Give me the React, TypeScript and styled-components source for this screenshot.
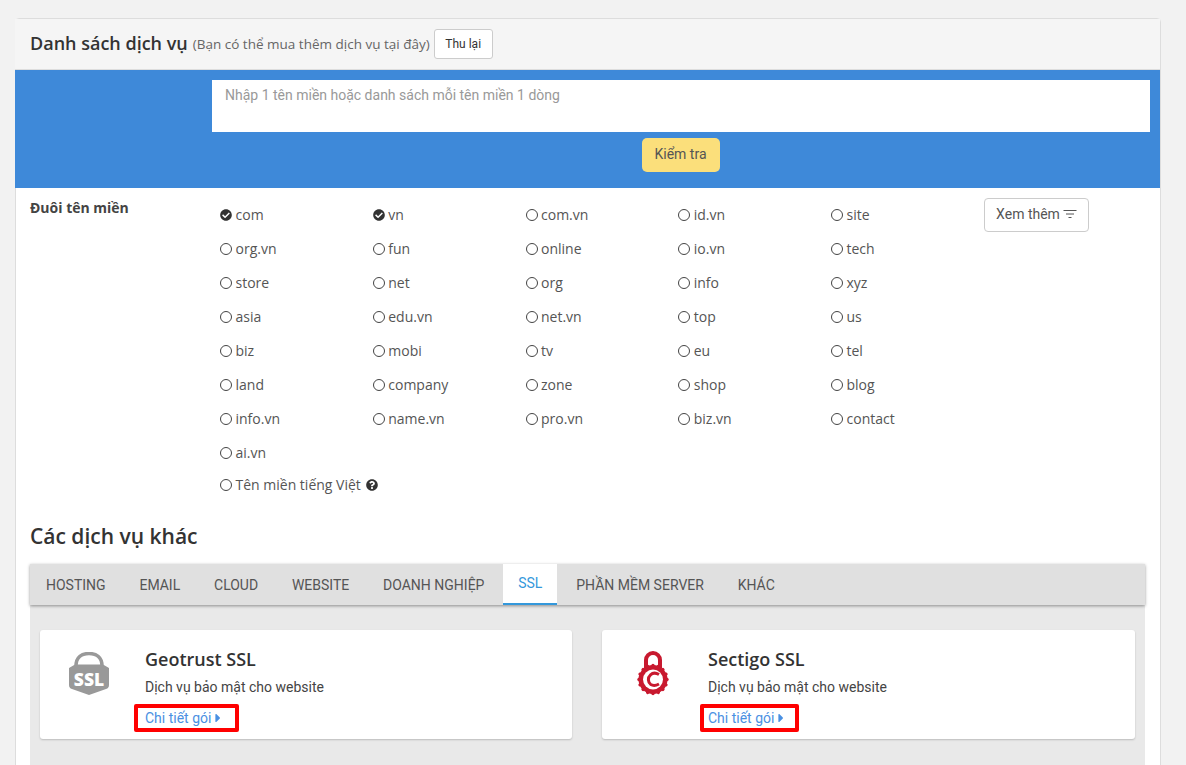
import React from 'react';
import styled, { createGlobalStyle } from 'styled-components';
import { FaCaretRight, FaCheckCircle, FaQuestionCircle } from 'react-icons/fa';

const GlobalStyle = createGlobalStyle`
  html, body {
    margin: 0;
    height: 765px;
    overflow: hidden;
    background: #f2f2f2;
  }
  * {
    box-sizing: border-box;
  }
`;

const Page = styled.div`
  padding: 18px 25px 0 15px;
  font-family: 'Open Sans', sans-serif;
  color: #444;
`;

const Panel = styled.section`
  background: #fff;
  border: 1px solid #ddd;
  border-radius: 4px 4px 0 0;
`;

const PanelHeader = styled.header`
  display: flex;
  align-items: center;
  height: 51px;
  padding: 0 15px;
  background: #f5f5f5;
  border-bottom: 1px solid #ddd;
  margin-left: -1px;
`;

const Title = styled.h3`
  margin: 0 0 3px;
  font-size: 18px;
  font-weight: 600;
  color: #333;
`;

const Hint = styled.span`
  margin-left: 5px;
  font-size: 13.5px;
  color: #666;
`;

const RetryButton = styled.button`
  margin-left: 4px;
  width: 59px;
  height: 30px;
  padding: 0;
  background: #fff;
  border: 1px solid #ccc;
  border-radius: 3px;
  font-family: Roboto, sans-serif;
  font-size: 12px;
  color: #333;
`;

const SearchBand = styled.div`
  display: flex;
  flex-direction: column;
  height: 118px;
  padding: 10px 10px 0 197px;
  background: #3e89d9;
  margin-left: -1px;
`;

const DomainInput = styled.textarea`
  display: block;
  width: 100%;
  height: 52px;
  padding: 7px 13px;
  border: 0;
  border-radius: 0;
  resize: none;
  background: #fff;
  font-family: Roboto, sans-serif;
  font-size: 14px;
  outline: none;
  &::placeholder {
    color: #999;
    opacity: 1;
  }
`;

const CheckButton = styled.button`
  align-self: flex-start;
  margin: 6px 0 0 430px;
  width: 78px;
  height: 34px;
  padding: 0 1px 2px 0;
  background: #fbdf7b;
  border: 0;
  border-radius: 5px;
  font-family: Roboto, sans-serif;
  font-size: 14px;
  color: #555;
`;

const DomainSection = styled.div`
  display: flex;
  padding: 10px 0 0 14px;
`;

const DomainLabel = styled.div`
  width: 190px;
  flex: none;
  font-size: 14px;
  font-weight: 700;
  color: #444;
`;

const DomainGrid = styled.div`
  width: 764px;
  flex: none;
  display: grid;
  grid-template-columns: repeat(5, 152.75px);
  grid-auto-rows: 34px;
`;

const DomainOption = styled.label<{ $wide?: boolean }>`
  display: flex;
  align-items: center;
  gap: 3.5px;
  height: 34px;
  padding-bottom: 1px;
  font-size: 14px;
  color: #555;
  ${(p) => (p.$wide ? 'grid-column: 1 / -1; margin-top: -2px;' : '')}
`;

const EmptyRadio = styled.span`
  width: 12px;
  height: 12px;
  flex: none;
  border: 1px solid #444;
  border-radius: 50%;
`;

const CheckedRadio = styled(FaCheckCircle)`
  width: 12px;
  height: 12px;
  flex: none;
  color: #333;
`;

const HelpIcon = styled(FaQuestionCircle)`
  width: 12px;
  height: 12px;
  margin-left: 2px;
  color: #333;
`;

const MoreButton = styled.button`
  display: flex;
  align-items: center;
  justify-content: center;
  gap: 3px;
  flex: none;
  width: 105px;
  height: 34px;
  padding: 0 0 2px;
  background: #fff;
  border: 1px solid #ccc;
  border-radius: 4px;
  font-family: Roboto, sans-serif;
  font-size: 14px;
  color: #555;
`;

const OtherServices = styled.div`
  padding: 0 15px 0 14px;
`;

const SectionTitle = styled.h2`
  margin: 17px 0 13px;
  font-size: 21px;
  line-height: 30px;
  font-weight: 600;
  color: #333;
`;

const TabBar = styled.nav`
  position: relative;
  display: flex;
  height: 41px;
  padding-left: 1px;
  gap: 3.8px;
  background: #e0e0e0;
  box-shadow: 0 1px 3px rgba(0, 0, 0, 0.4);
`;

const Tab = styled.a<{ $active?: boolean }>`
  display: flex;
  align-items: center;
  padding: 0 15px ${(p) => (p.$active ? '2px' : '0')};
  font-family: Roboto, sans-serif;
  font-size: 14px;
  color: ${(p) => (p.$active ? '#3498db' : '#555')};
  background: ${(p) => (p.$active ? '#fff' : 'transparent')};
  border-bottom: ${(p) => (p.$active ? '2px solid #3498db' : '0')};
`;

const TabContent = styled.div`
  display: grid;
  grid-template-columns: 532px 533px;
  column-gap: 30px;
  height: 200px;
  padding: 25px 10px 0;
  background: #e9e9e9;
`;

const ServiceCard = styled.article`
  display: flex;
  height: 109px;
  background: #fff;
  border-radius: 3px;
  box-shadow: 0 1px 2px rgba(0, 0, 0, 0.2);
`;

const CardIcon = styled.div<{ $top: number; $left: number; $width: number }>`
  width: ${(p) => p.$width}px;
  flex: none;
  padding: ${(p) => p.$top}px 0 0 ${(p) => p.$left}px;
`;

const CardBody = styled.div`
  display: flex;
  flex-direction: column;
  padding-top: 17px;
`;

const CardTitle = styled.h4`
  margin: 0;
  font-size: 18px;
  line-height: 24px;
  font-weight: 600;
  color: #333;
`;

const CardText = styled.p`
  margin: 6px 0 0;
  font-family: Roboto, sans-serif;
  font-size: 14px;
  line-height: 20px;
  color: #444;
`;

const DetailRow = styled.div`
  position: relative;
  margin-top: 9px;
  height: 20px;
`;

const DetailLink = styled.a`
  display: inline-flex;
  align-items: center;
  font-family: Roboto, sans-serif;
  font-size: 14px;
  line-height: 20px;
  color: #4a90e2;
`;

// red annotation drawn on top of the link
const Marker = styled.span<{ $left: number; $width: number }>`
  position: absolute;
  top: -2px;
  left: ${(p) => p.$left}px;
  width: ${(p) => p.$width}px;
  height: 28px;
  border: 4px solid #f00;
  border-radius: 2px;
`;

const rows = [
  ['com', 'vn', 'com.vn', 'id.vn', 'site'],
  ['org.vn', 'fun', 'online', 'io.vn', 'tech'],
  ['store', 'net', 'org', 'info', 'xyz'],
  ['asia', 'edu.vn', 'net.vn', 'top', 'us'],
  ['biz', 'mobi', 'tv', 'eu', 'tel'],
  ['land', 'company', 'zone', 'shop', 'blog'],
  ['info.vn', 'name.vn', 'pro.vn', 'biz.vn', 'contact'],
  ['ai.vn'],
];

const checked = ['com', 'vn'];

const tabs = ['HOSTING', 'EMAIL', 'CLOUD', 'WEBSITE', 'DOANH NGHIỆP', 'SSL', 'PHẦN MỀM SERVER', 'KHÁC'];

const FilterIcon = () => (
  <svg width="14" height="10" viewBox="0 0 14 10" fill="none" stroke="#555" strokeWidth="1">
    <path d="M0.5 1.500h13M3 5h8M5.500 8.500h3" />
  </svg>
);

const GeotrustIcon = () => (
  <svg width="44" height="44" viewBox="0 0 44 44">
    <path d="M9 14C9 5 15 1.500 22 1.500S35 5 35 14" fill="none" stroke="#999" strokeWidth="3.5" />
    <path d="M2 16 8 12.500h28l6 3.500v17q0 3-3 4l-17 6-17-6q-3-1-3-4z" fill="#999" />
    <text x="22" y="34" textAnchor="middle" fontFamily="'Open Sans', sans-serif" fontWeight="800" fontSize="17.5" fill="#fff">
      SSL
    </text>
  </svg>
);

const SectigoIcon = () => {
  const teeth = Array.from({ length: 16 }, (_, i) => (i * 360) / 16);
  return (
    <svg width="36" height="46" viewBox="0 0 36 46">
      <path d="M11 18V10a7 7 0 0 1 14 0V18" fill="none" stroke="#c8192f" strokeWidth="4" />
      {teeth.map((a) => (
        <circle key={a} cx="18" cy="15.500" r="1.700" fill="#c8192f" transform={`rotate(${a} 18 29.500)`} />
      ))}
      <circle cx="18" cy="29.500" r="14.500" fill="#c8192f" />
      <circle cx="18" cy="29.500" r="10" fill="#fff" />
      <path
        d="M24 24.500C21 22.800 17.500 23 15.500 24.800 12.500 27.500 12.800 32.500 15.800 34.500 18 35.800 21.500 35.300 24 34"
        fill="none"
        stroke="#c8192f"
        strokeWidth="3"
      />
    </svg>
  );
};

const App = () => {
  return (
    <Page>
      <GlobalStyle />
      <Panel>
        <PanelHeader>
          <Title>Danh sách dịch vụ</Title>
          <Hint>(Bạn có thể mua thêm dịch vụ tại đây)</Hint>
          <RetryButton type="button">Thu lại</RetryButton>
        </PanelHeader>

        <SearchBand>
          <DomainInput placeholder="Nhập 1 tên miền hoặc danh sách mỗi tên miền 1 dòng" />
          <CheckButton type="button">Kiểm tra</CheckButton>
        </SearchBand>

        <DomainSection>
          <DomainLabel>Đuôi tên miền</DomainLabel>
          <DomainGrid>
            {rows.flat().map((name) => (
              <DomainOption key={name}>
                {checked.includes(name) ? <CheckedRadio /> : <EmptyRadio />}
                {name}
              </DomainOption>
            ))}
            <DomainOption $wide>
              <EmptyRadio />
              Tên miền tiếng Việt
              <HelpIcon />
            </DomainOption>
          </DomainGrid>
          <MoreButton type="button">
            Xem thêm
            <FilterIcon />
          </MoreButton>
        </DomainSection>

        <OtherServices>
          <SectionTitle>Các dịch vụ khác</SectionTitle>
          <TabBar>
            {tabs.map((t) => (
              <Tab key={t} $active={t === 'SSL'}>
                {t}
              </Tab>
            ))}
          </TabBar>
          <TabContent>
            <ServiceCard>
              <CardIcon $top={22} $left={27} $width={105}>
                <GeotrustIcon />
              </CardIcon>
              <CardBody>
                <CardTitle>Geotrust SSL</CardTitle>
                <CardText>Dịch vụ bảo mật cho website</CardText>
                <DetailRow>
                  <DetailLink>
                    Chi tiết gói
                    <FaCaretRight size={14} />
                  </DetailLink>
                  <Marker $left={-11} $width={105} />
                </DetailRow>
              </CardBody>
            </ServiceCard>
            <ServiceCard>
              <CardIcon $top={20} $left={33} $width={106}>
                <SectigoIcon />
              </CardIcon>
              <CardBody>
                <CardTitle>Sectigo SSL</CardTitle>
                <CardText>Dịch vụ bảo mật cho website</CardText>
                <DetailRow>
                  <DetailLink>
                    Chi tiết gói
                    <FaCaretRight size={14} />
                  </DetailLink>
                  <Marker $left={-8} $width={99} />
                </DetailRow>
              </CardBody>
            </ServiceCard>
          </TabContent>
        </OtherServices>
      </Panel>
    </Page>
  );
};

export default App;
